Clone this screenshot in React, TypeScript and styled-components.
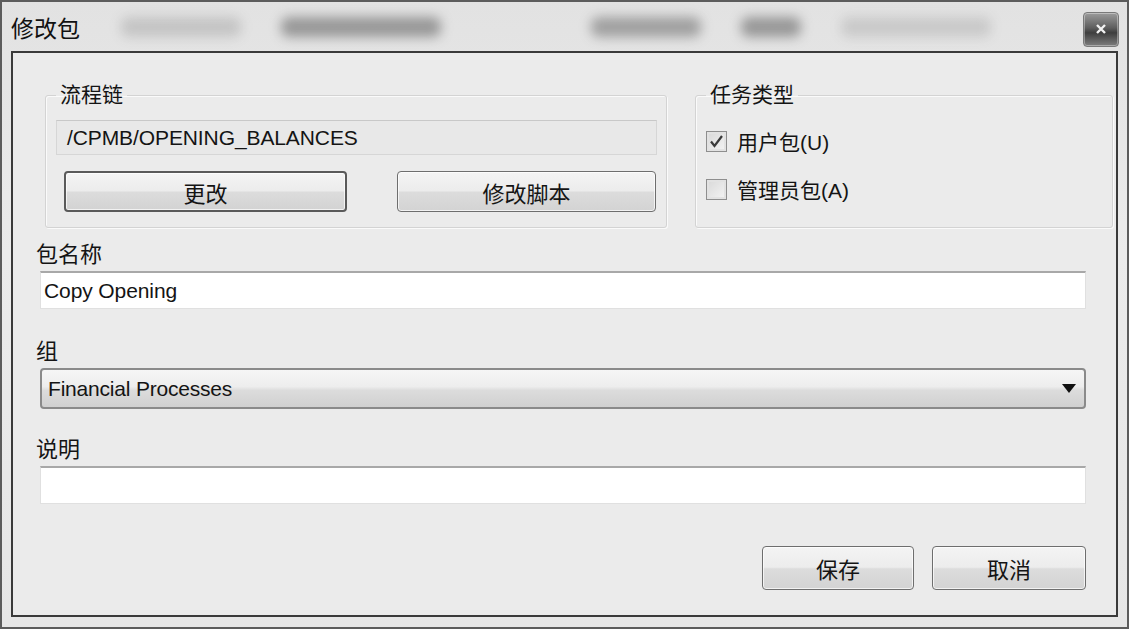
import React from 'react';
import styled, { createGlobalStyle } from 'styled-components';

const GlobalStyle = createGlobalStyle`
  html, body {
    margin: 0;
    padding: 0;
    background: #ffffff;
  }
  * {
    box-sizing: border-box;
  }
`;

const FONT = `"Liberation Sans", "Noto Sans CJK SC", sans-serif`;

const Window = styled.div`
  width: 1129px;
  height: 629px;
  display: flex;
  flex-direction: column;
  border: 2px solid #5c5c5c;
  padding: 0 9px 10px 9px;
  background: linear-gradient(180deg, #e2e2e2 0%, #ebebeb 40%, #e6e6e6 100%);
  font-family: ${FONT};
  color: #141414;
  overflow: hidden;
`;

const TitleBar = styled.div`
  height: 49px;
  display: flex;
  align-items: center;
`;

const Title = styled.span`
  font-size: 23px;
  color: #111;
  width: 110px;
`;

const Ghost = styled.span<{ $w: number; $shade: number }>`
  width: ${p => p.$w}px;
  height: 20px;
  margin-right: 40px;
  border-radius: 8px;
  background: rgba(60, 60, 60, ${p => p.$shade});
  filter: blur(6px);
`;

const Spacer = styled.div`
  flex: 1;
`;

const CloseButton = styled.div`
  width: 36px;
  height: 35px;
  margin: 5px -1px 0 0;
  border: 1px solid #7a7a7a;
  border-radius: 4px;
  background: linear-gradient(180deg, #9c9c9c 0%, #5e5e5e 45%, #3e3e3e 60%, #7e7e7e 100%);
  box-shadow: inset 0 0 0 1px rgba(255, 255, 255, 0.35);
  display: flex;
  align-items: center;
  justify-content: center;
`;

const Client = styled.div`
  flex: 1;
  border: 2px solid #3a3a3a;
  background: #ebebeb;
  padding: 0 30px 0 23px;
  display: flex;
  flex-direction: column;
`;

const GroupsRow = styled.div`
  display: flex;
  gap: 28px;
  margin: 30px -28px 0 9px;
`;

const Group = styled.fieldset<{ $w: number }>`
  width: ${p => p.$w}px;
  min-width: 0;
  flex: none;
  height: 145px;
  margin: 0;
  padding: 0 9px 0 10px;
  border: 1px solid #d3d3d3;
  border-radius: 3px;
  box-shadow: 1px 1px 0 #fafafa, inset 1px 1px 0 #fafafa;
  display: flex;
  flex-direction: column;
`;

const Legend = styled.legend`
  font-size: 21px;
  line-height: 24px;
  padding: 0 4px;
  margin-left: 0;
  color: #141414;
`;

const ReadOnlyBox = styled.div`
  margin-top: 13px;
  height: 35px;
  border: 1px solid #d6d6d6;
  border-top-color: #c8c8c8;
  background: #e8e8e8;
  padding-left: 10px;
  display: flex;
  align-items: center;
  font-size: 21px;
  letter-spacing: -0.1px;
`;

const ButtonRow = styled.div`
  margin-top: 16px;
  display: flex;
  justify-content: space-between;
  padding: 0 1px 0 8px;
`;

const Button = styled.button<{ $w: number; $default?: boolean }>`
  width: ${p => p.$w}px;
  height: ${p => (p.$default !== undefined ? 41 : 44)}px;
  border: ${p => (p.$default ? '2px solid #5a5a5a' : '1px solid #6e6e6e')};
  border-radius: 4px;
  background: linear-gradient(180deg, #f4f4f4 0%, #ececec 48%, #dcdcdc 52%, #d3d3d3 100%);
  box-shadow: inset 0 0 0 1px rgba(255, 255, 255, 0.7);
  font-family: ${FONT};
  font-size: 22px;
  color: #141414;
  padding: 0;
  cursor: default;
`;

const CheckRow = styled.label`
  height: 28px;
  margin-top: 20px;
  display: flex;
  align-items: center;
  gap: 10px;
  font-size: 21px;
  color: #141414;
`;

const Box = styled.span`
  width: 21px;
  height: 21px;
  border: 1px solid #8e8e8e;
  background: linear-gradient(135deg, #d8d8d8 0%, #f4f4f4 100%);
  box-shadow: inset 0 0 0 2px #e2e2e2;
  display: flex;
  align-items: center;
  justify-content: center;
`;

const FieldLabel = styled.div<{ $top: number }>`
  margin-top: ${p => p.$top}px;
  font-size: 22px;
  line-height: 28px;
  margin-bottom: 2px;
  color: #141414;
`;

const TextBox = styled.div`
  margin-left: 4px;
  height: 38px;
  background: #ffffff;
  border: 1px solid #e0e0e0;
  border-top: 2px solid #a8a8a8;
  display: flex;
  align-items: center;
  padding-left: 3px;
  font-size: 21px;
  letter-spacing: -0.1px;
`;

const Select = styled.div`
  margin-left: 4px;
  height: 41px;
  border: 2px solid #8a8a8a;
  border-radius: 4px;
  background: linear-gradient(180deg, #f6f6f6 0%, #ededed 45%, #dcdcdc 55%, #d0d0d0 100%);
  display: flex;
  align-items: center;
  padding: 0 8px 0 6px;
  font-size: 21px;
  letter-spacing: -0.2px;
`;

const SelectText = styled.span`
  flex: 1;
`;

const Footer = styled.div`
  margin-top: 42px;
  display: flex;
  justify-content: flex-end;
  gap: 18px;
`;

const Check = () => (
  <svg width="15" height="15" viewBox="0 0 15 15">
    <path d="M2 7.5 L5.5 12 L13 2" fill="none" stroke="#3a3a3a" strokeWidth="2.2" />
  </svg>
);

const App: React.FC = () => {
  return (
    <>
      <GlobalStyle />
      <Window>
        <TitleBar>
          <Title>修改包</Title>
          <Ghost $w={120} $shade={0.18} />
          <Ghost $w={160} $shade={0.45} />
          <Ghost $w={70} $shade={0.0} />
          <Ghost $w={110} $shade={0.4} />
          <Ghost $w={60} $shade={0.45} />
          <Ghost $w={150} $shade={0.15} />
          <Spacer />
          <CloseButton>
            <svg width="12" height="12" viewBox="0 0 12 12">
              <path d="M2 2 L10 10 M10 2 L2 10" stroke="#f2f2f2" strokeWidth="2.4" />
            </svg>
          </CloseButton>
        </TitleBar>
        <Client>
          <GroupsRow>
            <Group $w={622}>
              <Legend>流程链</Legend>
              <ReadOnlyBox>/CPMB/OPENING_BALANCES</ReadOnlyBox>
              <ButtonRow>
                <Button $w={283} $default>更改</Button>
                <Button $w={259} $default={false}>修改脚本</Button>
              </ButtonRow>
            </Group>
            <Group $w={418}>
              <Legend>任务类型</Legend>
              <CheckRow>
                <Box><Check /></Box>
                用户包(U)
              </CheckRow>
              <CheckRow>
                <Box />
                管理员包(A)
              </CheckRow>
            </Group>
          </GroupsRow>

          <FieldLabel $top={13}>包名称</FieldLabel>
          <TextBox>Copy Opening</TextBox>

          <FieldLabel $top={29}>组</FieldLabel>
          <Select>
            <SelectText>Financial Processes</SelectText>
            <svg width="14" height="9" viewBox="0 0 14 9">
              <path d="M0 0 H14 L7 9 Z" fill="#111" />
            </svg>
          </Select>

          <FieldLabel $top={27}>说明</FieldLabel>
          <TextBox />

          <Footer>
            <Button $w={152}>保存</Button>
            <Button $w={154}>取消</Button>
          </Footer>
        </Client>
      </Window>
    </>
  );
};

export default App;
